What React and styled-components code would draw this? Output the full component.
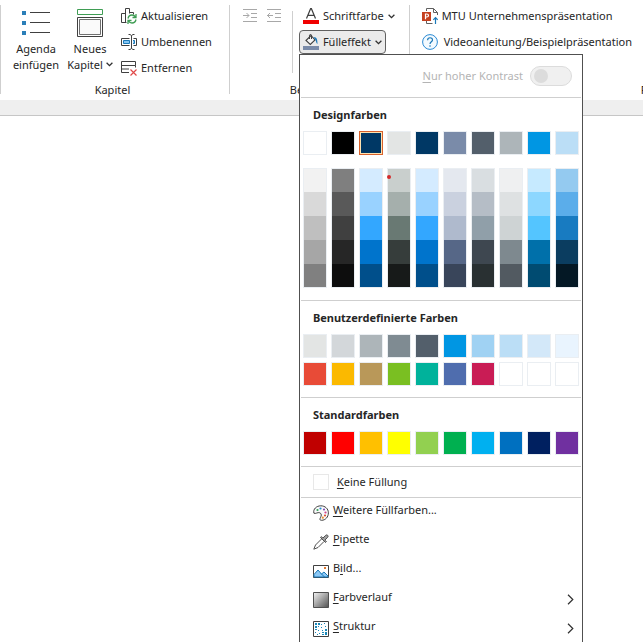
import React from "react";
import styled, { createGlobalStyle } from "styled-components";

const themeRow = ["#ffffff", "#000000", "#003865", "#e3e5e4", "#003865", "#7a8ba9", "#535f6b", "#adb5b9", "#0096e3", "#bbdef6"];

// each column runs from the lightest to the darkest shade
const shadeColumns = [
  ["#f2f2f2", "#d9d9d9", "#bfbfbf", "#a6a6a6", "#808080"],
  ["#7f7f7f", "#595959", "#404040", "#262626", "#0d0d0d"],
  ["#d4ebff", "#99d2ff", "#33a7ff", "#0074cc", "#004f8b"],
  ["#c9cfcd", "#a5afac", "#697973", "#363d3b", "#171a19"],
  ["#d4ebff", "#99d2ff", "#33a7ff", "#0074cc", "#004f8b"],
  ["#e4e8ef", "#cad1df", "#afbacd", "#566787", "#39455a"],
  ["#d9dee1", "#b5bdc6", "#909fa9", "#3e4750", "#293032"],
  ["#eff0f1", "#dee1e2", "#ced3d4", "#7e898f", "#525a61"],
  ["#c6eaff", "#8dd7ff", "#54c5ff", "#0070aa", "#004b71"],
  ["#94caf0", "#5badea", "#187bc1", "#0b3d60", "#041825"],
];

const customColors = [
  "#e3e5e4", "#d3d7da", "#adb5b9", "#7f8b92", "#535f6b", "#0096e3", "#a0d2f3", "#bbdef6", "#d3e8f9", "#e9f4fe",
  "#e84b37", "#fbb900", "#b99859", "#7abf22", "#00b29b", "#4f6dae", "#c91c55", "#ffffff", "#ffffff", "#ffffff",
];

const standardColors = ["#c00000", "#ff0000", "#ffc000", "#ffff00", "#92d050", "#00b050", "#00b0f0", "#0070c0", "#002060", "#7030a0"];

const Chevron = () => (
  <svg width="7" height="5" viewBox="0 0 7 5" fill="none" stroke="#303030" strokeWidth="1.3">
    <path d="M.6.8 3.5 3.7 6.4.8" />
  </svg>
);

const ArrowRight = () => (
  <svg width="7" height="11" viewBox="0 0 7 11" fill="none" stroke="#303030" strokeWidth="1.2">
    <path d="M1 .8 5.8 5.5 1 10.2" />
  </svg>
);

const AgendaIcon = () => (
  <svg width="28" height="28" viewBox="0 0 28 28">
    <path fill="#2b7fb8" d="M0 2h4v4H0zM0 12h4v4H0zM0 22h4v4H0z" />
    <path stroke="#404040" d="M8 3.5h20M8 13.5h20M8 23.5h20" />
  </svg>
);

const ChapterIcon = () => (
  <svg width="26" height="28" viewBox="0 0 26 28" fill="none">
    <path stroke="#3f9d54" d="M.5.5h25v5H.5z" />
    <path stroke="#404040" fill="#fff" d="M.5 8.5h25v19H.5z" />
    <path stroke="#707070" fill="#fafafa" d="M2.5 10.5h21v15h-21z" />
  </svg>
);

const RefreshIcon = () => (
  <svg width="16" height="16" viewBox="0 0 16 16" fill="none">
    <path stroke="#404040" d="M5.5 14.5h-5v-9h4M4.5 14.5V.5h4v5M8.5 4.5h4v2" />
    <path stroke="#3f9d54" strokeWidth="1.3" d="M7 10.5c.5-2.5 2-3.500 4-3.500 1.600 0 2.800.8 3.500 2M15 6v3.500h-3.500M15 11.500c-.5 2.500-2 3.500-4 3.500-1.600 0-2.800-.8-3.500-2M7 16v-3.500h3.500" />
  </svg>
);

const RenameIcon = () => (
  <svg width="16" height="16" viewBox="0 0 16 16" fill="none">
    <path stroke="#404040" d="M8.5 4.5h-8v7h8M12.5 4.5h3v7h-3" />
    <path fill="#83c5f2" stroke="#1a78b8" d="M2.5 6.5h6v3h-6zM12 6.5h1.5v3H12" />
    <path stroke="#404040" d="M10.5 1.5v13M7.5.5H9l1.500 1 1.500-1h1.500M7.500 15.500H9l1.500-1 1.500 1h1.500" />
  </svg>
);

const RemoveIcon = () => (
  <svg width="16" height="16" viewBox="0 0 16 16" fill="none">
    <path stroke="#404040" d="M8 12.500H.5V1.500h14v4H.5M14.500 5.500v2M.5 9H8" />
    <path stroke="#e04848" strokeWidth="1.2" d="m9.500 9.500 6 6M15.500 9.500l-6 6" />
  </svg>
);

const IndentIcon = ({ back }) => (
  <svg width="14" height="14" viewBox="0 0 14 14" fill="none" stroke="#a8a8a8">
    <path d="M0 .5h14M8 4.5h6M8 8.5h6M0 12.5h14" />
    <path d={back ? "M0 6.5h6M3 4 .5 6.5 3 9" : "M0 6.5h6M3.500 4 6 6.500 3.500 9"} />
  </svg>
);

const FontColorIcon = () => (
  <svg width="16" height="16" viewBox="0 0 16 16" fill="none">
    <path stroke="#404040" strokeWidth="1.2" d="M3.500 10.500 7.600.7h.8l4.100 9.800M5 7.300h6" />
    <path fill="#f00000" d="M0 12h16v4H0z" />
  </svg>
);

const FillIcon = () => (
  <svg width="16" height="16" viewBox="0 0 16 16" fill="none">
    <path fill="#f6f6f6" stroke="#404040" strokeWidth="1.1" d="M3 6.500 8 1.500l4 4.500-4.700 4.500z" />
    <path stroke="#404040" d="M6.500 5V1.200c0-.9 2-.9 2 0V5" />
    <path fill="#1a78b8" d="M10.500 3.200c3-.2 4 1.500 4 6.800-1.500-.5-1.200-2.800-2-4z" />
    <path fill="#7a8ba9" d="M0 12h16v4H0z" />
  </svg>
);

const PresentationIcon = () => (
  <svg width="16" height="16" viewBox="0 0 16 16" fill="none">
    <path stroke="#606060" d="M4.500 3V.5h7l4 4V7M11.500.5v4h4M4.500 13v2.500h6" />
    <path fill="#c4401f" d="M0 4h9v9H0z" />
    <path stroke="#fff" strokeWidth="1.2" d="M3.500 11.200V6h1.200c2.400 0 2.400 3 0 3H3.500" />
    <path stroke="#1a78b8" strokeWidth="1.2" d="M13.500 16V9.500M11.300 11.800l2.200-2.300 2.200 2.300" />
  </svg>
);

const HelpIcon = () => (
  <svg width="16" height="16" viewBox="0 0 16 16" fill="none">
    <circle cx="8" cy="8" r="7.4" fill="#f3faff" stroke="#2a8ad4" />
    <path stroke="#1a78b8" strokeWidth="1.2" d="M5.600 6.300c0-3.500 4.900-3.200 4.900-.3C10.500 7.800 8 7.800 8 10M8 11.300v1.400" />
  </svg>
);

const PaletteIcon = () => (
  <svg width="16" height="16" viewBox="0 0 16 16" fill="none">
    <path stroke="#404040" fill="#fafafa" d="M6.800 7.800C4.500 6.900 2.800 9.200.9 8.200-.2 4.200 3.500.8 7.800.8c4.300 0 7.600 3 7.600 7 0 4.200-3 7.500-6.800 7.500-3 0-1.200-2.300-.5-4.200.5-1.500-.1-2.800-1.300-3.300z" />
    <circle cx="4.5" cy="5" r="1.1" fill="#2fa05a" />
    <circle cx="7.5" cy="3.500" r="1.1" fill="#2a8ad4" />
    <circle cx="11" cy="4.500" r="1.1" fill="#8050b0" />
    <circle cx="12.5" cy="7.500" r="1.1" fill="#d04090" />
    <circle cx="12" cy="10.500" r="1.1" fill="#e05030" />
    <circle cx="9.800" cy="12.700" r="1.1" fill="#e89030" />
  </svg>
);

const PipetteIcon = () => (
  <svg width="16" height="16" viewBox="0 0 16 16" fill="none" stroke="#505050">
    <path d="M8.500 5 2.500 11 .8 15.200 5 13.500l6-6" />
    <path fill="#a0a0a0" d="m7.500 3.500 5 5 .9-.9-1.500-1.500 2.800-2.800c1.300-1.300-.7-3.300-2-2L9.900 4.100 8.400 2.600z" />
  </svg>
);

const PictureIcon = () => (
  <svg width="16" height="13" viewBox="0 0 16 13" fill="none">
    <path fill="#fff" stroke="#404040" d="M.5.5h15v12H.5z" />
    <path fill="#8cc8f5" stroke="#1a78b8" d="M1 9.500 5 5l3.500 4L11 7l4 4v1H1z" />
    <path stroke="#1a78b8" d="m8 8.500 3.500 3.500" />
    <path fill="#e07830" d="M11 2h2v2h-2z" />
  </svg>
);

const GradientIcon = () => (
  <svg width="16" height="16" viewBox="0 0 16 16">
    <defs>
      <linearGradient id="grey-fade" x1="0" y1="0" x2="1" y2="1">
        <stop offset="0" stopColor="#f4f4f4" />
        <stop offset="1" stopColor="#505050" />
      </linearGradient>
    </defs>
    <path fill="url(#grey-fade)" stroke="#505050" d="M.5.5h15v15H.5z" />
  </svg>
);

const TextureIcon = () => (
  <svg width="16" height="16" viewBox="0 0 16 16">
    <path fill="#fff" stroke="#404040" d="M.5.5h15v15H.5z" />
    <path
      fill="#1a88b8"
      d="M2 2h2v2H2zM5 2h2v2H5zM8 3h1v1H8zM11 2h1v1h-1zM2 5h2v2H2zM5 5h1v1H5zM8 6h1v1H8zM2 8h2v1H2zM5 9h1v1H5zM12 5h1v1h-1zM9 9h1v1H9zM12 8h2v2h-2zM2 11h1v1H2zM6 12h1v1H6zM9 11h2v1H9zM12 11h2v3h-2zM9 13h2v1H9zM4 13h1v1H4z"
    />
  </svg>
);

const Swatches = ({ colors, selected }) => (
  <SwatchGrid>
    {colors.map((color, i) => (
      <Swatch key={i} type="button" $color={color} $selected={i === selected} aria-label={color} />
    ))}
  </SwatchGrid>
);

const FillMenu = () => (
  <Menu>
    <ContrastRow>
      <label htmlFor="contrast">
        <u>N</u>ur hoher Kontrast
      </label>
      <Toggle id="contrast" type="checkbox" role="switch" disabled />
    </ContrastRow>
    <Divider />
    <Section>
      <h3>Designfarben</h3>
      <Swatches colors={themeRow} selected={2} />
      <ShadeGrid>
        {shadeColumns.map((shades, i) => (
          <ShadeColumn key={i}>
            {shades.map((shade) => (
              <Shade key={shade} type="button" $color={shade} aria-label={shade} />
            ))}
            {i === 3 && <Marker />}
          </ShadeColumn>
        ))}
      </ShadeGrid>
    </Section>
    <Divider />
    <Section>
      <h3>Benutzerdefinierte Farben</h3>
      <Swatches colors={customColors} />
    </Section>
    <Divider />
    <Section>
      <h3>Standardfarben</h3>
      <Swatches colors={standardColors} />
    </Section>
    <Divider />
    <NoFill type="button">
      <EmptyBox />
      <span>
        <u>K</u>eine Füllung
      </span>
    </NoFill>
    <Divider />
    <MenuItem type="button">
      <MenuIcon><PaletteIcon /></MenuIcon>
      <span><u>W</u>eitere Füllfarben...</span>
    </MenuItem>
    <MenuItem type="button">
      <MenuIcon><PipetteIcon /></MenuIcon>
      <span><u>P</u>ipette</span>
    </MenuItem>
    <MenuItem type="button">
      <MenuIcon><PictureIcon /></MenuIcon>
      <span>B<u>i</u>ld...</span>
    </MenuItem>
    <MenuItem type="button">
      <MenuIcon><GradientIcon /></MenuIcon>
      <span><u>F</u>arbverlauf</span>
      <SubArrow><ArrowRight /></SubArrow>
    </MenuItem>
    <MenuItem type="button">
      <MenuIcon><TextureIcon /></MenuIcon>
      <span><u>S</u>truktur</span>
      <SubArrow><ArrowRight /></SubArrow>
    </MenuItem>
  </Menu>
);

export default function App() {
  return (
    <Page>
      <GlobalStyle />
      <Ribbon>
        <Separator />
        <Group $end={13}>
          <GroupBody>
            <BigButton type="button">
              <AgendaIcon />
              <span>Agenda<br />einfügen</span>
            </BigButton>
            <BigButton type="button">
              <ChapterIcon />
              <span>Neues<br />Kapitel <Chevron /></span>
            </BigButton>
            <Column>
              <Command type="button"><RefreshIcon />Aktualisieren</Command>
              <Command type="button"><RenameIcon />Umbenennen</Command>
              <Command type="button"><RemoveIcon />Entfernen</Command>
            </Column>
          </GroupBody>
          <GroupLabel>Kapitel</GroupLabel>
        </Group>
        <Separator />
        <Group $end={10}>
          <GroupBody>
            <IconButton type="button" aria-label="Einzug vergrößern" disabled><IndentIcon /></IconButton>
            <IconButton type="button" aria-label="Einzug verkleinern" disabled><IndentIcon back /></IconButton>
            <InnerSeparator />
            <Column>
              <Command type="button"><FontColorIcon />Schriftfarbe<Chevron /></Command>
              <MenuAnchor>
                <Command type="button" $open aria-expanded="true"><FillIcon />Fülleffekt<Chevron /></Command>
                <FillMenu />
              </MenuAnchor>
            </Column>
          </GroupBody>
          <GroupLabel>Bearbeiten</GroupLabel>
        </Group>
        <Separator />
        <Group $end={10} $wide>
          <GroupBody>
            <Column>
              <Command type="button"><PresentationIcon />MTU Unternehmenspräsentation</Command>
              <Command type="button" $gap={6}><HelpIcon />Videoanleitung/Beispielpräsentation</Command>
            </Column>
          </GroupBody>
          <GroupLabel>F</GroupLabel>
        </Group>
      </Ribbon>
      <Strip />
    </Page>
  );
}

const GlobalStyle = createGlobalStyle`
  * {
    box-sizing: border-box;
  }

  body {
    margin: 0;
    background: #fff;
  }

  body, button {
    color: #262626;
    font-family: "Noto Sans", "Open Sans", sans-serif;
    font-size: 11px;
    line-height: 16px;
  }

  button {
    margin: 0;
    padding: 0;
    border: 0;
    background: none;
    white-space: nowrap;
  }

  svg {
    flex-shrink: 0;
  }

  u {
    text-underline-offset: 2px;
  }
`;

const Page = styled.main`
  position: relative;
  height: 100vh;
  overflow: hidden;
`;

const Ribbon = styled.header`
  display: flex;
`;

const Separator = styled.div`
  flex: 0 0 1px;
  margin: 5px 0 6px;
  background: #cfcfcf;
`;

const Group = styled.section`
  flex: none;
  min-width: ${({ $wide }) => ($wide ? "470px" : "0")};
  padding: 4px ${({ $end }) => $end}px 2px 8px;
`;

const GroupBody = styled.div`
  display: flex;
  min-height: 78px;
`;

const GroupLabel = styled.div`
  text-align: center;
`;

const Column = styled.div`
  display: flex;
  flex-direction: column;
  align-items: flex-start;
  gap: 2px;
`;

const Command = styled.button`
  display: flex;
  align-items: center;
  gap: ${({ $gap }) => $gap || 4}px;
  height: 24px;
  padding: 0 3px;
  border: 1px solid ${({ $open }) => ($open ? "#606060" : "transparent")};
  border-radius: 4px;
  background: ${({ $open }) => ($open ? "#ebebeb" : "none")};
`;

const BigButton = styled.button`
  display: flex;
  flex-direction: column;
  align-items: center;
  gap: 4px;
  width: 54px;
  padding-top: 5px;

  span svg {
    vertical-align: 2px;
  }
`;

const IconButton = styled.button`
  display: flex;
  justify-content: center;
  width: 24px;
  height: 24px;
  padding-top: 5px;
`;

const InnerSeparator = styled.div`
  width: 1px;
  margin: 7px 6px 9px;
  background: #cfcfcf;
`;

const MenuAnchor = styled.div`
  position: relative;
`;

const Menu = styled.div`
  position: absolute;
  z-index: 1;
  top: 100%;
  left: 0;
  width: 284px;
  border: 1px solid #505050;
  background: #fff;
`;

const ContrastRow = styled.div`
  display: flex;
  align-items: center;
  justify-content: flex-end;
  gap: 7px;
  height: 42px;
  padding-right: 10px;
  color: #b4b4b4;
`;

const Toggle = styled.input`
  appearance: none;
  width: 42px;
  height: 20px;
  margin: 0;
  padding: 2px 3px;
  border: 1px solid #dcdcdc;
  border-radius: 10px;
  background: #f0f0f0;

  &::before {
    content: "";
    display: block;
    width: 14px;
    height: 14px;
    border-radius: 50%;
    background: #dcdcdc;
  }
`;

const Divider = styled.div`
  height: 1px;
  margin: 0 1px;
  background: #cfcfcf;
`;

const Section = styled.section`
  padding: 9px 3px 11px;

  h3 {
    margin: 0 0 8px;
    padding-left: 10px;
    font-size: 11px;
    font-weight: 700;
    line-height: 16px;
  }
`;

const SwatchGrid = styled.div`
  display: grid;
  grid-template-columns: repeat(10, 24px);
  gap: 4px;
`;

const Swatch = styled.button`
  height: 24px;
  border: 1px solid ${({ $selected }) => ($selected ? "#d8622c" : "#eaeef2")};
  background: ${({ $color }) => $color};
  box-shadow: ${({ $selected }) => ($selected ? "inset 0 0 0 1px #ffe2b0" : "none")};
`;

const ShadeGrid = styled(SwatchGrid)`
  margin: 13px 0 1px;
`;

const ShadeColumn = styled.div`
  position: relative;
  display: grid;
  grid-template-rows: 23px 24px 24px 24px 23px;
  border: 1px solid #eaeef2;
`;

const Shade = styled.button`
  background: ${({ $color }) => $color};
`;

const Marker = styled.i`
  position: absolute;
  top: 6px;
  left: -1px;
  width: 4px;
  height: 4px;
  border-radius: 50%;
  background: #d42a2a;
`;

const NoFill = styled.button`
  display: flex;
  align-items: center;
  gap: 8px;
  width: 100%;
  height: 30px;
  padding-left: 13px;
`;

const EmptyBox = styled.i`
  width: 16px;
  height: 16px;
  border: 1px solid #e8e8e8;
`;

const MenuItem = styled.button`
  display: flex;
  align-items: flex-start;
  gap: 4px;
  width: 100%;
  height: 29px;
  padding: 4px 8px 0 13px;
`;

const MenuIcon = styled.span`
  display: flex;
  align-items: center;
  height: 16px;
  margin-top: 3px;
`;

const SubArrow = styled.span`
  display: flex;
  margin: 5px 0 0 auto;
`;

const Strip = styled.div`
  height: 16px;
  border-bottom: 1px solid #c6c6c6;
  background: #efefef;
`;
